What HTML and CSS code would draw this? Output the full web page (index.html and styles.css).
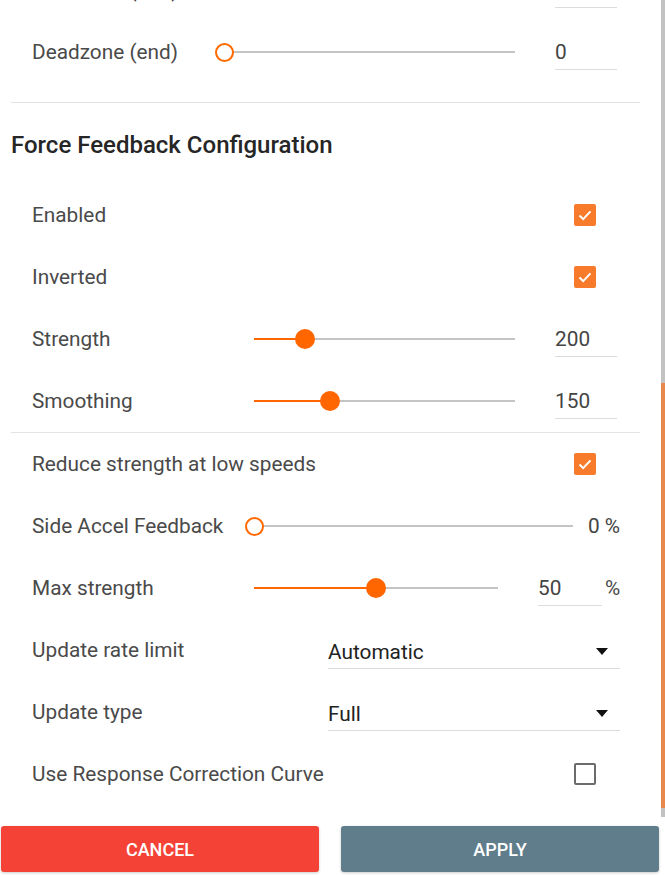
FILE: index.html
```html
<!DOCTYPE html>
<html lang="en">
<head>
<meta charset="UTF-8">
<meta name="viewport" content="width=device-width, initial-scale=1.0">
<title>Force Feedback Settings</title>
<link rel="stylesheet" href="styles.css">
</head>
<body>
<div class="dialog">
  <div class="scroll">
    <div class="content">
      <div class="row">
        <span class="label label-short">Deadzone (min)</span>
        <div class="slider"><div class="slider-thumb empty"></div></div>
        <input class="num" type="text" value="">
      </div>
      <div class="row">
        <span class="label label-short">Deadzone (end)</span>
        <div class="slider"><div class="slider-thumb empty"></div></div>
        <input class="num" type="text" value="0">
      </div>

      <div class="divider gap"></div>
      <h2 class="section-title">Force Feedback Configuration</h2>

      <div class="row">
        <span class="label">Enabled</span>
        <span class="check on"><svg viewBox="0 0 24 24"><path d="M6 12.5l4 4 8-8.5"/></svg></span>
      </div>
      <div class="row">
        <span class="label">Inverted</span>
        <span class="check on"><svg viewBox="0 0 24 24"><path d="M6 12.5l4 4 8-8.5"/></svg></span>
      </div>
      <div class="row">
        <span class="label">Strength</span>
        <div class="slider"><div class="slider-fill" style="width:19.6%"></div><div class="slider-thumb" style="left:19.6%"></div></div>
        <input class="num" type="text" value="200">
      </div>
      <div class="row">
        <span class="label">Smoothing</span>
        <div class="slider"><div class="slider-fill" style="width:29.2%"></div><div class="slider-thumb" style="left:29.2%"></div></div>
        <input class="num" type="text" value="150">
      </div>

      <div class="divider"></div>

      <div class="row">
        <span class="label label-wide">Reduce strength at low speeds</span>
        <span class="check on"><svg viewBox="0 0 24 24"><path d="M6 12.5l4 4 8-8.5"/></svg></span>
      </div>
      <div class="row">
        <span class="label">Side Accel Feedback</span>
        <div class="slider"><div class="slider-thumb empty"></div></div>
        <span class="value">0 %</span>
      </div>
      <div class="row">
        <span class="label">Max strength</span>
        <div class="slider"><div class="slider-fill" style="width:49.8%"></div><div class="slider-thumb" style="left:49.8%"></div></div>
        <input class="num num-pct" type="text" value="50">
        <span class="unit">%</span>
      </div>
      <div class="row">
        <span class="label label-select">Update rate limit</span>
        <div class="select"><span>Automatic</span><i class="caret"></i></div>
      </div>
      <div class="row">
        <span class="label label-select">Update type</span>
        <div class="select"><span>Full</span><i class="caret"></i></div>
      </div>
      <div class="row">
        <span class="label label-wide">Use Response Correction Curve</span>
        <span class="check"></span>
      </div>
    </div>
    <div class="scrollbar"><div class="scrollbar-thumb"></div></div>
  </div>

  <div class="actions">
    <button class="btn btn-cancel">Cancel</button>
    <button class="btn btn-apply">Apply</button>
  </div>
</div>
</body>
</html>
```

FILE: styles.css
```css
body {
  margin: 0;
  font-family: Roboto, "Liberation Sans", sans-serif;
  background-color: #fff;
  color: #4a4a4a;
}
.dialog {
  width: 665px;
  height: 875px;
  display: flex;
  flex-direction: column;
}
.scroll {
  position: relative;
  height: 817px;
  overflow: hidden;
}
.content {
  margin-top: -41px;
  padding: 0 25px 0 11px;
}
.scrollbar {
  position: absolute;
  top: 0;
  right: 0;
  width: 4px;
  height: 100%;
  background-color: #c2c2c2;
}
.scrollbar-thumb {
  margin-top: 383px;
  height: 425px;
  background-color: #e8884d;
}

.divider {
  height: 1px;
  background-color: #e3e3e3;
}
.divider.gap {
  margin-top: 19px;
}
.section-title {
  margin: 0;
  padding: 28px 0 25px;
  font-size: 24px;
  line-height: 28px;
  font-weight: 500;
  color: #262626;
}

.row {
  display: flex;
  align-items: center;
  height: 62px;
  padding: 0 20px 0 21px;
  font-size: 20.8px;
}
.label {
  flex: none;
  width: 222px;
}
.label-short {
  width: 192px;
}
.label-select {
  width: 296px;
}
.label-wide {
  width: auto;
  white-space: nowrap;
}

.slider {
  position: relative;
  flex: 1;
  height: 2px;
  background-color: #c4c4c4;
}
.slider-fill {
  height: 100%;
  background-color: #ff6600;
}
.slider-thumb {
  position: absolute;
  top: 50%;
  left: 0;
  width: 20px;
  height: 20px;
  margin: -10px 0 0 -10px;
  border-radius: 50%;
  background-color: #ff6600;
}
.slider-thumb.empty {
  width: 19px;
  height: 19px;
  margin: -9.5px 0 0 -9.5px;
  box-sizing: border-box;
  border: 2px solid #ff6a00;
  background-color: #fff;
}

.num {
  flex: none;
  width: 62px;
  height: 36px;
  margin: 0 3px 0 40px;
  padding: 0;
  box-sizing: border-box;
  border: none;
  border-bottom: 1px solid #dcdcdc;
  font: inherit;
  color: #444;
  outline: none;
}
.num-pct {
  width: 64px;
  margin-right: 3px;
}
.unit {
  width: 15px;
  text-align: right;
}
.value {
  margin-left: 15px;
  color: #444;
}

.check {
  width: 22px;
  height: 22px;
  margin: 0 24px 0 auto;
  box-sizing: border-box;
  border: 2px solid #6b6b6b;
  border-radius: 2px;
}
.check.on {
  border: none;
  background-color: #f87b2c;
}
.check svg {
  display: block;
  width: 22px;
  height: 22px;
  fill: none;
  stroke: #fff;
  stroke-width: 2.2;
}

.select {
  flex: 1;
  display: flex;
  align-items: center;
  justify-content: space-between;
  height: 32px;
  margin-top: 4px;
  border-bottom: 1px solid #dcdcdc;
  color: #222;
}
.caret {
  width: 0;
  height: 0;
  margin-right: 12px;
  border-left: 6px solid transparent;
  border-right: 6px solid transparent;
  border-top: 7px solid #111;
}

.actions {
  display: flex;
  gap: 22px;
  padding: 9px 6px 0 1px;
}
.btn {
  flex: 1;
  height: 46px;
  border: none;
  border-radius: 3px;
  font-family: Roboto, "Liberation Sans", sans-serif;
  font-size: 18px;
  font-weight: 500;
  text-transform: uppercase;
  color: #fff;
  box-shadow: 0 1px 3px rgba(0, 0, 0, 0.2);
  cursor: pointer;
}
.btn-cancel {
  background-color: #f44336;
}
.btn-apply {
  background-color: #607d8b;
}
```
